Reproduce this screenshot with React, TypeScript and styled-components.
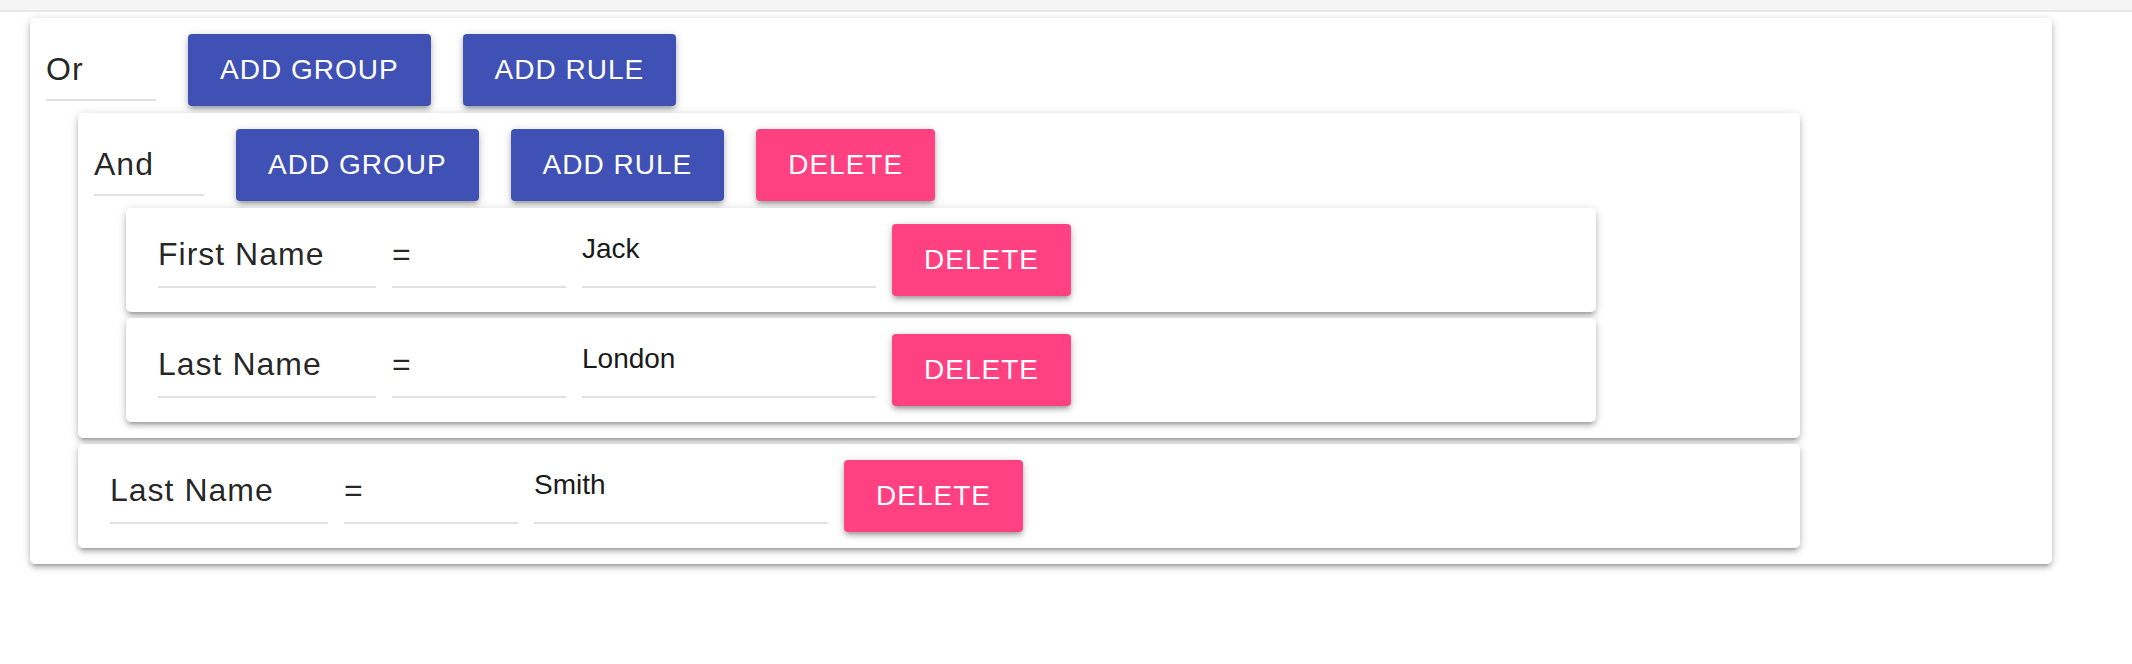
import styled, { createGlobalStyle } from 'styled-components';

const GlobalStyle = createGlobalStyle`
  html, body {
    margin: 0;
    padding: 0;
    background: #fff;
  }
  body {
    font-family: "Liberation Sans", Arial, sans-serif;
    color: rgba(0, 0, 0, 0.87);
  }
`;

const paperShadow =
  '0 2px 10px 0 rgba(0,0,0,0.2), 0 4px 4px 0 rgba(0,0,0,0.14), 0 6px 2px -4px rgba(0,0,0,0.12)';

const TopBar = styled.div`
  height: 10px;
  background: #f5f5f5;
  border-bottom: 2px solid #e8e8e8;
`;

const Page = styled.main`
  padding: 6px 0 40px 30px;
`;

const GroupCard = styled.section<{ $width: number }>`
  width: ${(p) => p.$width}px;
  box-sizing: border-box;
  padding: 16px;
  background: #fff;
  border-radius: 5px;
  box-shadow: ${paperShadow};
`;

const GroupHeader = styled.div`
  display: flex;
  align-items: flex-start;
  gap: 32px;
  height: 72px;
`;

const CombinatorSelect = styled.div`
  width: 110px;
  height: 67px;
  box-sizing: border-box;
  padding-top: 19px;
  border-bottom: 2px solid #e0e0e0;
  font-size: 32px;
  line-height: 32px;
  letter-spacing: 1px;
  cursor: pointer;
`;

const ChildList = styled.div<{ $width: number }>`
  display: flex;
  flex-direction: column;
  gap: 6px;
  width: ${(p) => p.$width}px;
  margin: 7px 0 0 32px;
`;

const RuleCard = styled.div`
  display: flex;
  align-items: flex-start;
  gap: 16px;
  padding: 16px 32px;
  background: #fff;
  border-radius: 5px;
  box-shadow: ${paperShadow};
`;

const FieldSelect = styled.div<{ $width: number }>`
  width: ${(p) => p.$width}px;
  height: 64px;
  box-sizing: border-box;
  padding-top: 14px;
  border-bottom: 2px solid #e0e0e0;
  font-size: 32px;
  line-height: 32px;
  letter-spacing: 1px;
  white-space: nowrap;
  cursor: pointer;
`;

const ValueInput = styled.input`
  width: 294px;
  height: 64px;
  box-sizing: border-box;
  padding: 9px 0 21px;
  margin: 0;
  border: none;
  border-bottom: 2px solid #e0e0e0;
  outline: none;
  background: transparent;
  font-family: "Liberation Sans", Arial, sans-serif;
  font-size: 28px;
  color: #1a1a1a;
`;

const Button = styled.button<{ $tone: 'primary' | 'danger' }>`
  flex: none;
  height: 72px;
  padding: 0 32px;
  border: none;
  border-radius: 4px;
  background: ${(p) => (p.$tone === 'danger' ? '#ff4081' : '#3f51b5')};
  color: #fff;
  font-family: "Liberation Sans", Arial, sans-serif;
  font-size: 28px;
  letter-spacing: 1px;
  text-transform: uppercase;
  box-shadow: ${paperShadow};
  cursor: pointer;
`;

type Rule = { field: string; operator: string; value: string };

function RuleRow({ rule }: { rule: Rule }) {
  return (
    <RuleCard>
      <FieldSelect $width={218}>{rule.field}</FieldSelect>
      <FieldSelect $width={174}>{rule.operator}</FieldSelect>
      <ValueInput defaultValue={rule.value} />
      <Button $tone="danger">Delete</Button>
    </RuleCard>
  );
}

export default function App() {
  return (
    <>
      <GlobalStyle />
      <TopBar />
      <Page>
        <GroupCard $width={2022}>
          <GroupHeader>
            <CombinatorSelect>Or</CombinatorSelect>
            <Button $tone="primary">Add Group</Button>
            <Button $tone="primary">Add Rule</Button>
          </GroupHeader>
          <ChildList $width={1722}>
            <GroupCard $width={1722}>
              <GroupHeader>
                <CombinatorSelect>And</CombinatorSelect>
                <Button $tone="primary">Add Group</Button>
                <Button $tone="primary">Add Rule</Button>
                <Button $tone="danger">Delete</Button>
              </GroupHeader>
              <ChildList $width={1470}>
                <RuleRow rule={{ field: 'First Name', operator: '=', value: 'Jack' }} />
                <RuleRow rule={{ field: 'Last Name', operator: '=', value: 'London' }} />
              </ChildList>
            </GroupCard>
            <RuleRow rule={{ field: 'Last Name', operator: '=', value: 'Smith' }} />
          </ChildList>
        </GroupCard>
      </Page>
    </>
  );
}
